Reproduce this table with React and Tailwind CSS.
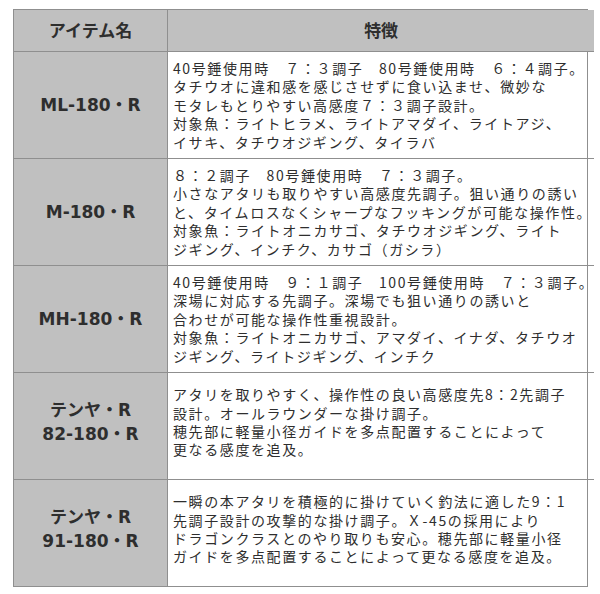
import React from 'react'

const rows = [
  {
    name: ['ML-180・R'],
    lines: [
      '40号錘使用時　７：３調子　80号錘使用時　６：４調子。',
      'タチウオに違和感を感じさせずに食い込ませ、微妙な',
      'モタレもとりやすい高感度７：３調子設計。',
      '対象魚：ライトヒラメ、ライトアマダイ、ライトアジ、',
      'イサキ、タチウオジギング、タイラバ',
    ],
    pad: '',
  },
  {
    name: ['M-180・R'],
    lines: [
      '８：２調子　80号錘使用時　７：３調子。',
      '小さなアタリも取りやすい高感度先調子。狙い通りの誘い',
      'と、タイムロスなくシャープなフッキングが可能な操作性。',
      '対象魚：ライトオニカサゴ、タチウオジギング、ライト',
      'ジギング、インチク、カサゴ（ガシラ）',
    ],
    pad: '',
  },
  {
    name: ['MH-180・R'],
    lines: [
      '40号錘使用時　９：１調子　100号錘使用時　７：３調子。',
      '深場に対応する先調子。深場でも狙い通りの誘いと',
      '合わせが可能な操作性重視設計。',
      '対象魚：ライトオニカサゴ、アマダイ、イナダ、タチウオ',
      'ジギング、ライトジギング、インチク',
    ],
    pad: '',
  },
  {
    name: ['テンヤ・R', '82-180・R'],
    lines: [
      'アタリを取りやすく、操作性の良い高感度先8：2先調子',
      '設計。オールラウンダーな掛け調子。',
      '穂先部に軽量小径ガイドを多点配置することによって',
      '更なる感度を追及。',
    ],
    pad: 'pb-2',
  },
  {
    name: ['テンヤ・R', '91-180・R'],
    lines: [
      '一瞬の本アタリを積極的に掛けていく釣法に適した9：1',
      '先調子設計の攻撃的な掛け調子。Ｘ-45の採用により',
      'ドラゴンクラスとのやり取りも安心。穂先部に軽量小径',
      'ガイドを多点配置することによって更なる感度を追及。',
    ],
    pad: 'pb-2',
  },
]

export default function App() {
  return (
    <div className="w-[600px] h-[594px] bg-white pt-[9px] pl-[13px]">
      <div className="w-[575px] border border-[#8f8f8f] grid grid-cols-[153px_1fr] text-[#2e2e2e]">
        <div className="h-[41px] bg-[#c0c0c0] flex items-center justify-center font-bold text-[17px] font-['Noto_Sans_CJK_JP',sans-serif] pb-[2px]">
          アイテム名
        </div>
        <div className="h-[41px] bg-[#c0c0c0] border-l border-[#8f8f8f] flex items-center justify-center font-bold text-[17px] font-['Noto_Sans_CJK_JP',sans-serif] pb-[2px]">
          特徴
        </div>
        {rows.map((r, i) => (
          <React.Fragment key={i}>
            <div className={`h-[107px] bg-[#c0c0c0] border-t border-[#8f8f8f] flex flex-col items-center justify-center font-bold text-[17px] leading-[24px] font-['DejaVu_Sans','Noto_Sans_CJK_JP',sans-serif] ${r.pad}`}>
              {r.name.map((n, j) => (
                <div key={j}>{n}</div>
              ))}
            </div>
            <div className={`h-[107px] border-t border-l border-[#8f8f8f] flex flex-col justify-center pl-[5px] text-[14px] tracking-[1.6px] leading-[18.4px] font-['Noto_Sans_CJK_JP',sans-serif] ${r.pad}`}>
              {r.lines.map((l, j) => (
                <div key={j} className="whitespace-nowrap">{l}</div>
              ))}
            </div>
          </React.Fragment>
        ))}
      </div>
    </div>
  )
}
